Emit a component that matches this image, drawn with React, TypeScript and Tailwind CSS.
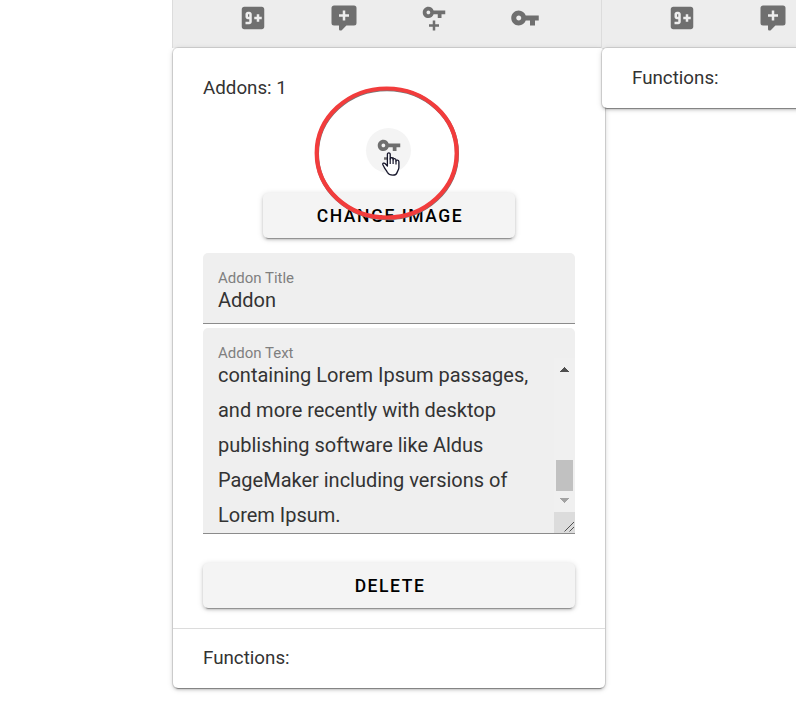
import type { ReactNode } from "react";

const NINE_PLUS =
  "M19 3H5C3.9 3 3 3.9 3 5V19C3 20.1 3.9 21 5 21H19C20.1 21 21 20.1 21 19V5C21 3.9 20.1 3 19 3M11 15C11 16.11 10.1 17 9 17H6V15H9V13H8C6.9 13 6 12.11 6 11V9C6 7.9 6.9 7 8 7H9C10.11 7 11 7.9 11 9V15M19 13H17V15H15V13H13V11H15V9H17V11H19V13M8 9H9V11H8V9Z";
const COMMENT_PLUS =
  "M9,22A1,1 0 0,1 8,21V18H4A2,2 0 0,1 2,16V4C2,2.89 2.9,2 4,2H20A2,2 0 0,1 22,4V16A2,2 0 0,1 20,18H13.9L10.2,21.71C10,21.9 9.75,22 9.5,22H9M11,6V9H8V11H11V14H13V11H16V9H13V6H11Z";
const KEY_PLUS =
  "M7.5 3C5 3 3 5 3 7.5S5 12 7.5 12C9.5 12 11.1 10.8 11.7 9H15V12H18V9H21V6H11.7C11.1 4.2 9.5 3 7.5 3M7.5 9C6.7 9 6 8.3 6 7.5S6.7 6 7.5 6 9 6.7 9 7.5 8.3 9 7.5 9M8 17H11V14H13V17H16V19H13V22H11V19H8V17Z";
const KEY =
  "M7 14C5.9 14 5 13.1 5 12S5.9 10 7 10 9 10.9 9 12 8.1 14 7 14M12.6 10C11.8 7.7 9.6 6 7 6C3.7 6 1 8.7 1 12S3.7 18 7 18C9.6 18 11.8 16.3 12.6 14H16V18H20V14H23V10H12.6Z";

function Icon({ d }: { d: string }) {
  return (
    <svg viewBox="0 0 24 24" className="size-[30px] shrink-0 fill-[#6f6f6f]">
      <path fillRule="evenodd" d={d} />
    </svg>
  );
}

function Toolbar() {
  return (
    <div className="flex h-12 w-[433px] border-l border-[#dcdcdc] bg-[#ededed] pt-[2.5px] pl-[35px]">
      {[NINE_PLUS, COMMENT_PLUS, KEY_PLUS, KEY].map((d) => (
        <div key={d} className="flex w-[90.6px] shrink-0 justify-center">
          <Icon d={d} />
        </div>
      ))}
    </div>
  );
}

function Card({ children }: { children: ReactNode }) {
  return (
    <div className="ml-px w-[432px] rounded-[5px] bg-white shadow-[0_4px_1px_-3px_rgba(0,0,0,0.3),0_2px_3px_0_rgba(0,0,0,0.16),0_1px_6px_0_rgba(0,0,0,0.14),0_0_0_1px_rgba(0,0,0,0.1)]">
      {children}
    </div>
  );
}

function RaisedButton({ className, children }: { className: string; children: ReactNode }) {
  return (
    <button
      className={`flex h-[45px] items-center justify-center rounded-[5px] bg-[#f4f4f4] pt-[2px] pl-[2px] text-[17.5px] font-medium tracking-[1.56px] text-black shadow-[0_4px_1px_-3px_rgba(0,0,0,0.3),0_2px_3px_0_rgba(0,0,0,0.16),0_1px_6px_0_rgba(0,0,0,0.14)] ${className}`}
    >
      {children}
    </button>
  );
}

function Functions({ className }: { className: string }) {
  return <div className={`flex items-center pl-[30px] text-[18.75px] ${className}`}>Functions:</div>;
}

function HandCursor() {
  return (
    <svg viewBox="0 0 18 24" className="absolute top-[24px] left-[16px] h-[24px] w-[18px]">
      <path
        d="M5.4 14V2.3C5.4.4 8.2.4 8.2 2.3V7C8.2 5.2 11.1 5.4 11.1 7.2V7.8C11.1 6.2 14 6.4 14 8.2V9C14 7.5 16.9 7.8 16.9 9.8V15.5C16.9 17.8 15.4 18.8 15 20.8C14.5 22.4 13.3 23.2 10.8 23.2C8 23.2 6.5 22.3 5.3 20.2C4.4 18.3 3 17.3 2.2 15.3L.9 12.8C.3 11.1 2.2 10.6 3.3 11.7L5.4 14Z"
        fill="#fff"
        stroke="#15152a"
        strokeWidth="1.3"
        strokeLinejoin="round"
      />
      <path d="M8.2 6.5V12M11.1 7.5V12M14 8.5V12.5" fill="none" stroke="#15152a" strokeWidth="1.2" />
    </svg>
  );
}

function Scrollbar() {
  return (
    <div className="flex w-[21px] shrink-0 flex-col items-center bg-[#f0f0f0]">
      <svg viewBox="0 0 9 5" className="mt-[9px] h-[5px] w-[9px] shrink-0" shapeRendering="crispEdges">
        <path d="M0 5L4.5 0L9 5Z" fill="#505050" />
      </svg>
      <div className="mt-[88px] h-[31px] w-[17px] shrink-0 bg-[#c1c1c1]" />
      <svg viewBox="0 0 9 5" className="mt-[7px] h-[5px] w-[9px] shrink-0" shapeRendering="crispEdges">
        <path d="M0 0L4.5 5L9 0Z" fill="#a3a3a3" />
      </svg>
      <svg viewBox="0 0 21 21" className="mt-[9px] h-[21px] w-[21px] shrink-0 bg-[#dcdcdc]">
        <path d="M10.5 19.5L20 10M15.5 19.5L20 15" stroke="#505050" strokeWidth="1" />
      </svg>
    </div>
  );
}

export default function App() {
  return (
    <div className="relative flex h-[702px] w-[796px] overflow-hidden bg-white pl-[172px] font-[Roboto,sans-serif] text-[#333]">
      <section className="w-[429px] shrink-0">
        <Toolbar />
        <Card>
          <div className="flex h-[580px] flex-col items-center px-[30px] pt-[26px]">
            <div className="h-[28px] self-stretch text-[18.75px] leading-[28px]">Addons: 1</div>
            <div className="relative mt-[26px] mr-[1px] flex size-[45px] items-center justify-center rounded-full bg-[#f4f4f4]">
              <Icon d={KEY_PLUS} />
              <HandCursor />
              <svg viewBox="0 0 146 136" className="absolute top-[-43px] left-[-52px] z-10 h-[136px] w-[146px]">
                <ellipse cx="73" cy="68.7" rx="70" ry="64.5" fill="none" stroke="#777" strokeWidth="4" />
                <ellipse cx="72.7" cy="68" rx="70" ry="64.5" fill="none" stroke="#f23c3c" strokeWidth="4.2" />
              </svg>
            </div>
            <RaisedButton className="mt-[20px] w-[252px]">CHANGE IMAGE</RaisedButton>
            <div className="mt-[15px] h-[71px] w-[372px] shrink-0 rounded-t-[5px] border-b border-[#8b8b8b] bg-[#efefef] px-[15px] pt-[15px]">
              <div className="text-[15px] leading-[20px] text-[#7f7f7f]">Addon Title</div>
              <div className="text-[20px] leading-[25px]">Addon</div>
            </div>
            <div className="mt-[4px] flex h-[206px] w-[372px] shrink-0 flex-col overflow-hidden rounded-t-[5px] border-b border-[#8b8b8b] bg-[#efefef] pt-[15px]">
              <div className="h-[15px] pl-[15px] text-[15px] leading-[20px] text-[#7f7f7f]">Addon Text</div>
              <div className="flex h-[175px]">
                <div className="flex-1 pl-[15px] text-[20px] leading-[35px] tracking-[-0.01px] whitespace-nowrap">
                  <div>containing Lorem Ipsum passages,</div>
                  <div>and more recently with desktop</div>
                  <div>publishing software like Aldus</div>
                  <div>PageMaker including versions of</div>
                  <div>Lorem Ipsum.</div>
                </div>
                <Scrollbar />
              </div>
            </div>
            <RaisedButton className="mt-[29px] w-[372px] shrink-0">DELETE</RaisedButton>
          </div>
          <div className="border-t border-[#dcdcdc]">
            <Functions className="h-[59px] pb-px" />
          </div>
        </Card>
      </section>
      <section className="relative w-[433px] shrink-0">
        <Toolbar />
        <Card>
          <Functions className="h-[60px]" />
        </Card>
      </section>
    </div>
  );
}
